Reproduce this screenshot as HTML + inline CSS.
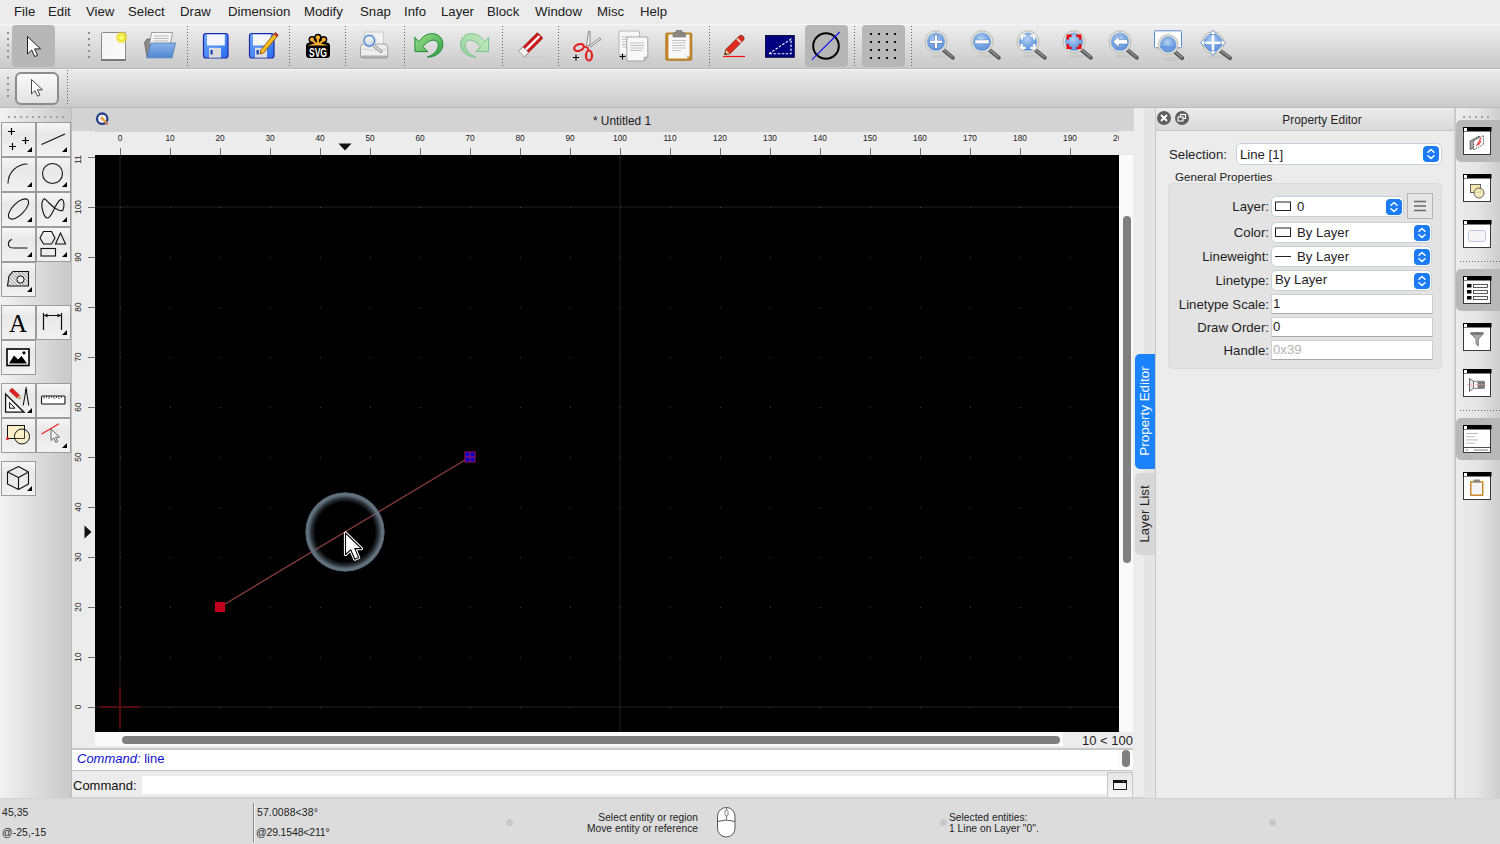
<!DOCTYPE html>
<html><head><meta charset="utf-8">
<style>
*{margin:0;padding:0;box-sizing:border-box}
html,body{width:1500px;height:844px;overflow:hidden;background:#ececec;font-family:"Liberation Sans",sans-serif;color:#1a1a1a;position:relative}
.a{position:absolute}
svg{overflow:visible;position:absolute}
#menu{left:0;top:0;width:1500px;height:24px;background:#ececec}
#menu span{position:absolute;top:4px;font-size:13.2px;line-height:16px;color:#202020}
#tb1{left:0;top:24px;width:1500px;height:45px;background:linear-gradient(#eeeeee,#c9c9c9);border-top:1px solid #f6f6f6;border-bottom:1px solid #b9b9b9}
#tb2{left:0;top:69px;width:1500px;height:39px;background:linear-gradient(#ebebeb,#cacaca);border-top:1px solid #f5f5f5;border-bottom:1px solid #bbbbbb}
.grip{position:absolute;width:2px;background:repeating-linear-gradient(#8e8e8e 0 2px,transparent 2px 6px)}
.hgrip{position:absolute;height:2px;background:repeating-linear-gradient(90deg,#8e8e8e 0 2px,transparent 2px 5px)}
.sep{position:absolute;width:1px;background:repeating-linear-gradient(#606060 0 1px,transparent 1px 3px)}
.hsep{position:absolute;height:1px;background:repeating-linear-gradient(90deg,#606060 0 1px,transparent 1px 3px)}
.sel{position:absolute;background:#b7b7b7;border-radius:4px}
.tb{position:absolute;width:35px;height:35px;border:1px solid #a6a6a6;background:linear-gradient(#fbfbfb,#e4e4e4)}
.rl{position:absolute;font-size:8.3px;line-height:10px;color:#222;text-align:center;width:30px}
#status .t{position:absolute;font-size:10.4px;line-height:12px;color:#222;white-space:nowrap}
.lbl{position:absolute;font-size:13.2px;line-height:15px;color:#1e1e1e;text-align:right;white-space:nowrap}
.combo{position:absolute;background:#fff;border:1px solid #c9d0d8;border-radius:5px;height:21px}
.field{position:absolute;background:#fff;border:1px solid #cfcfcf;border-bottom-color:#a8a8a8;height:20px}
.ftxt{position:absolute;font-size:13.2px;line-height:15px;color:#1e1e1e;white-space:nowrap}
.bluebtn{position:absolute;width:16px;height:16px;border-radius:4px;background:#1c7cf7}

</style></head><body>
<div id="menu" class="a">
<span style="left:14px">File</span><span style="left:48px">Edit</span><span style="left:86px">View</span><span style="left:128px">Select</span><span style="left:180px">Draw</span><span style="left:228px">Dimension</span><span style="left:304px">Modify</span><span style="left:360px">Snap</span><span style="left:404px">Info</span><span style="left:441px">Layer</span><span style="left:487px">Block</span><span style="left:535px">Window</span><span style="left:597px">Misc</span><span style="left:640px">Help</span>
</div>
<div id="tb1" class="a"></div>
<div id="tb2" class="a"></div>
<div class="grip" style="left:7px;top:32px;height:28px"></div>
<div class="sel" style="left:12px;top:25px;width:43px;height:42px"></div>
<svg style="left:27px;top:36px" width="14" height="21"><path d="M0 0v17.5l4.2-4 3 6.6 2.8-1.3-2.9-6.4h5.9z" transform="translate(0.5 0.5)" fill="#fff" stroke="#222" stroke-width="1" stroke-linejoin="round"/></svg>
<div class="grip" style="left:88px;top:32px;height:28px"></div>
<svg style="left:0;top:0" width="1500" height="70"><defs><radialGradient id="glow"><stop offset="0.2" stop-color="#ffff80"/><stop offset="0.55" stop-color="#f0e020"/><stop offset="1" stop-color="#f0e020" stop-opacity="0"/></radialGradient><linearGradient id="pg" x1="0" y1="0" x2="1" y2="1"><stop offset="0" stop-color="#f2f2f2"/><stop offset="1" stop-color="#fcfcfc"/></linearGradient><linearGradient id="fl" x1="0" y1="0" x2="0" y2="1"><stop offset="0" stop-color="#8ab4e8"/><stop offset="1" stop-color="#4f88d0"/></linearGradient><linearGradient id="fd" x1="0" y1="0" x2="1" y2="1"><stop offset="0" stop-color="#70a8f8"/><stop offset="1" stop-color="#2a6ef0"/></linearGradient><linearGradient id="gr" x1="0" y1="0" x2="1" y2="1"><stop offset="0" stop-color="#9ee08a"/><stop offset="1" stop-color="#2ea043"/></linearGradient><linearGradient id="grl" x1="0" y1="0" x2="1" y2="1"><stop offset="0" stop-color="#c8ecc0"/><stop offset="1" stop-color="#8fd09a"/></linearGradient><radialGradient id="lens" cx="0.45" cy="0.35" r="0.7"><stop offset="0" stop-color="#b8d4f4"/><stop offset="0.5" stop-color="#7aa8e4"/><stop offset="1" stop-color="#5a8cd8"/></radialGradient></defs><rect x="101.5" y="32.5" width="24" height="28" rx="1" fill="url(#pg)" stroke="#8a8a8a"/><rect x="101" y="59" width="25" height="2" fill="#7a7a7a"/><circle cx="121.5" cy="37.5" r="6.5" fill="url(#glow)"/><path d="M144.5 42.5 L147 39 H152 L149 57.5 H147 Z" fill="#8a8a8a" stroke="#666" stroke-width="0.8"/><path d="M151.5 32.5 H172.5 L170 45 H149.5 Z" fill="#f6f6f6" stroke="#8a8a8a" stroke-width="0.8"/><path d="M154 36h15M153.5 38.5h15M153 41h15" stroke="#b8b8b8" stroke-width="1"/><path d="M151 43 H175.5 L172 57.8 H146.8 Z" fill="url(#fl)" stroke="#4a7ab8" stroke-width="0.8"/><rect x="203.5" y="33.5" width="24.5" height="24.5" rx="2.5" fill="url(#fd)" stroke="#2028a8" stroke-width="1.2"/><rect x="207" y="34.5" width="17.8" height="11" fill="#f4f6fc"/><rect x="209" y="47.8" width="12" height="9.8" fill="#dcdcdc"/><rect x="210.5" y="50" width="2.2" height="4.5" fill="#1840b0"/><rect x="249.5" y="33.5" width="24.5" height="24.5" rx="2.5" fill="url(#fd)" stroke="#2028a8" stroke-width="1.2"/><rect x="253" y="34.5" width="17.8" height="11" fill="#f4f6fc"/><rect x="255" y="47.8" width="12" height="9.8" fill="#dcdcdc"/><rect x="256.5" y="50" width="2.2" height="4.5" fill="#1840b0"/><path d="M260.5 50.5 L274 34 L277 36.5 L263.5 53 L260 54 Z" fill="#f8c020" stroke="#8a4a10" stroke-width="0.9"/><path d="M274 34 L275.5 32.5 L278.3 35 L277 36.5 Z" fill="#e04040" stroke="#8a2a10" stroke-width="0.8"/><g fill="#000"><rect x="306" y="42.5" width="24" height="15.5" rx="3.5"/><circle cx="317.9" cy="37.4" r="3.7"/><circle cx="312" cy="39.6" r="3.5"/><circle cx="323.8" cy="39.6" r="3.5"/><path d="M309 44 L314 38 H322 L327 44Z"/></g><g fill="#f8ae30"><circle cx="317.9" cy="37.4" r="2.2"/><circle cx="312" cy="39.6" r="2.1"/><circle cx="323.8" cy="39.6" r="2.1"/></g><path d="M317.9 37.5 V44.5 M312 39.7 L317 44.5 M323.8 39.7 L318.8 44.5" stroke="#f8ae30" stroke-width="2"/><path d="M307.8 45.6 Q312 43.8 317.9 43.3 Q324 43.8 328.2 45.6 Z" fill="#f8ae30"/><text x="318" y="56.8" text-anchor="middle" font-family="Liberation Sans" font-weight="bold" font-size="12.5" fill="#fff" textLength="18" lengthAdjust="spacingAndGlyphs">SVG</text><rect x="364.5" y="32" width="19" height="14" rx="1" fill="#f2f2f2" stroke="#c4c4c4" stroke-width="0.8"/><path d="M360.5 47 Q360.5 44 364 44 H384 Q387.7 44 387.7 47 V56 Q387.7 58 385 58 H363 Q360.5 58 360.5 56 Z" fill="#eeeeee" stroke="#9a9a9a" stroke-width="0.9"/><rect x="361" y="55.5" width="26.5" height="2.6" rx="1" fill="#8a8a8a" opacity="0.6"/><path d="M362.5 49 Q374 51.5 386 49" fill="none" stroke="#c8c8c8" stroke-width="0.8"/><path d="M372.5 44.5 L381 51.5" stroke="#8a8a8a" stroke-width="3.2" stroke-linecap="round"/><path d="M372.5 44.5 L381 51.5" stroke="#d4d4d4" stroke-width="1.8" stroke-linecap="round"/><circle cx="369.3" cy="40.7" r="6.8" fill="#f6f6f6" stroke="#c8c8c8" stroke-width="0.6"/><circle cx="369.3" cy="40.7" r="5.4" fill="#cfdcec" stroke="#3c7ad0" stroke-width="1.2"/><ellipse cx="368.8" cy="39.3" rx="3.5" ry="2.4" fill="#eef3fa" opacity="0.8"/><path d="M414.8 37.3 L415 51.6 L427.7 51.6 L422.9 46.5 C426 43 429 40.3 433 40.1 C436.5 40 438.5 42.5 438.3 45.5 C438 50.5 433 55.5 427.3 57 C434 57.8 443 52.5 442.9 44.1 C442.8 37.5 437.5 33.6 432.2 33.6 C427 33.6 422.5 36.5 418.7 41.9 Z" fill="url(#gr)" stroke="#1f8a34" stroke-width="1" stroke-linejoin="round"/><g transform="matrix(-1 0 0 1 903.5 0)"><path d="M414.8 37.3 L415 51.6 L427.7 51.6 L422.9 46.5 C426 43 429 40.3 433 40.1 C436.5 40 438.5 42.5 438.3 45.5 C438 50.5 433 55.5 427.3 57 C434 57.8 443 52.5 442.9 44.1 C442.8 37.5 437.5 33.6 432.2 33.6 C427 33.6 422.5 36.5 418.7 41.9 Z" fill="url(#grl)" stroke="#7cc48a" stroke-width="1" stroke-linejoin="round"/></g><ellipse cx="532" cy="57.2" rx="11" ry="1.3" fill="#c8c8c8" opacity="0.8"/><g transform="translate(531 44.5) rotate(-45)"><rect x="-13" y="-4" width="26" height="8" rx="1" fill="#d01818" stroke="#801010" stroke-width="0.6"/><rect x="-8" y="-1.2" width="20" height="2.4" fill="#fafafa"/><rect x="-13.5" y="-4" width="6" height="8" fill="#f4f4f4" stroke="#808080" stroke-width="0.6"/></g><path d="M586.5 46 L588.5 31.5 L590 31 L590 45 Z" fill="#f4f4f4" stroke="#707070" stroke-width="0.8"/><path d="M589.5 45.5 L600 37.8 L600.8 39.5 L590.5 47 Z" fill="#f4f4f4" stroke="#707070" stroke-width="0.8"/><ellipse cx="579" cy="47.5" rx="5" ry="3.2" transform="rotate(-20 579 47.5)" fill="none" stroke="#e02020" stroke-width="2.2"/><ellipse cx="589" cy="55.5" rx="3" ry="5" fill="none" stroke="#e02020" stroke-width="2.2"/><path d="M583.5 46.3 L588 48 L588 50.5" stroke="#e02020" stroke-width="1.8" fill="none"/><path d="M573 57.5h6M576 54.5v6" stroke="#000" stroke-width="1.1"/><path d="M619 31 H638.5 Q639.5 31 639.5 32 V55 H619 Z" fill="#f6f6f6" stroke="#a8a8a8" stroke-width="0.8"/><path d="M622 37h5M622 39.5h5M622 42h5M622 44.5h5M622 47h5" stroke="#c4c4c4"/><path d="M626.8 37 H646.8 Q647.8 37 647.8 38 V57 L644 61 H626.8 Z" fill="#f8f8f8" stroke="#9a9a9a" stroke-width="0.9"/><path d="M647.8 57 L644 61 V57 Z" fill="#c8c8c8" stroke="#9a9a9a" stroke-width="0.6"/><path d="M630 43h14M630 45.5h14M630 48h14M630 50.5h12" stroke="#c0c0c0"/><path d="M619.5 56.5h6M622.5 53.5v6" stroke="#000" stroke-width="1.1"/><rect x="665.8" y="33" width="26" height="27.3" rx="1.2" fill="#c88a2a" stroke="#a06a18" stroke-width="0.8"/><path d="M668.5 34.5 H689.5 V56 L687 58.5 H668.5 Z" fill="#f8f8f8"/><path d="M689.5 56 L687 58.5 V56 Z" fill="#bbb"/><path d="M672 40.5h14M672 43h14M672 45.5h13M672 48h14M672 50.5h9" stroke="#c4c4c4"/><path d="M673 37 V34 Q673 32.5 674.5 32.5 H676 V30.5 H682 V32.5 H683.5 Q685.5 32.5 685.5 34 V37 Z" fill="#8a8a80" stroke="#707068" stroke-width="0.6"/><path d="M723 56.5h22" stroke="#ee1010" stroke-width="1.2"/><g transform="translate(734 45.5) rotate(-45)"><path d="M-13 0 L-8.5 -3 H10 Q13 -3 13 0 Q13 3 10 3 H-8.5 Z" fill="#e02a20" stroke="#7a3a10" stroke-width="0.8"/><path d="M-13 0 L-8.5 -3 V3 Z" fill="#f0d0a0" stroke="#7a3a10" stroke-width="0.6"/><path d="M-13 0 L-11 -1.3 V1.3 Z" fill="#222"/><rect x="6" y="-3" width="2" height="6" fill="#e8c8c8"/></g><rect x="765.5" y="35.5" width="28.8" height="21.8" fill="#000080" stroke="#101040" stroke-width="1"/><path d="M769 53.7 L791 39 V53.7 Z" fill="none" stroke="#fff" stroke-width="1.1" stroke-dasharray="2.5 1.5"/></svg>
<div class="sel" style="left:805px;top:25px;width:43px;height:42px"></div>
<svg style="left:805px;top:25px" width="43" height="42"><circle cx="21" cy="21" r="12.8" fill="none" stroke="#000" stroke-width="2"/><path d="M7 34.7 L34.7 7" stroke="#1010f0" stroke-width="1.1"/></svg>
<div class="sep" style="left:854px;top:26px;height:40px"></div>
<div class="sep" style="left:911px;top:26px;height:40px"></div>
<div class="sel" style="left:862px;top:25px;width:43px;height:42px"></div>
<svg style="left:0;top:0" width="1" height="1"><g fill="#111"><rect x="870" y="33" width="2" height="2"/><rect x="870" y="41" width="2" height="2"/><rect x="870" y="49" width="2" height="2"/><rect x="870" y="57" width="2" height="2"/><rect x="878" y="33" width="2" height="2"/><rect x="878" y="41" width="2" height="2"/><rect x="878" y="49" width="2" height="2"/><rect x="878" y="57" width="2" height="2"/><rect x="886" y="33" width="2" height="2"/><rect x="886" y="41" width="2" height="2"/><rect x="886" y="49" width="2" height="2"/><rect x="886" y="57" width="2" height="2"/><rect x="894" y="33" width="2" height="2"/><rect x="894" y="41" width="2" height="2"/><rect x="894" y="49" width="2" height="2"/><rect x="894" y="57" width="2" height="2"/></g></svg>
<div class="sep" style="left:187px;top:26px;height:40px"></div>
<div class="sep" style="left:289px;top:26px;height:40px"></div>
<div class="sep" style="left:345px;top:26px;height:40px"></div>
<div class="sep" style="left:404px;top:26px;height:40px"></div>
<div class="sep" style="left:502px;top:26px;height:40px"></div>
<div class="sep" style="left:558px;top:26px;height:40px"></div>
<div class="sep" style="left:709px;top:26px;height:40px"></div>
<svg style="left:0;top:0" width="1500" height="70"><ellipse cx="939" cy="56.3" rx="9" ry="2" fill="#b8b8b8" opacity="0.35"/><path d="M943.92 50.379999999999995 L952.8 57.699999999999996" stroke="#5a5a5a" stroke-width="4" stroke-linecap="round"/><path d="M944.42 50.17999999999999 L952.3 56.9" stroke="#9a9a9a" stroke-width="1.2" stroke-linecap="round"/><circle cx="936" cy="41.8" r="11" fill="#e8e8e0" stroke="#b4b4aa" stroke-width="0.9"/><circle cx="936" cy="41.8" r="9" fill="url(#lens)" stroke="#8aa8d0" stroke-width="0.5"/><path d="M929.5 41.8h13M936 35.3v13" stroke="#4a6ab0" stroke-width="3.6"/><path d="M929.8 41.8h12.4M936 35.6v12.4" stroke="#fff" stroke-width="2.4"/><ellipse cx="985" cy="56.3" rx="9" ry="2" fill="#b8b8b8" opacity="0.35"/><path d="M989.92 50.379999999999995 L998.8 57.699999999999996" stroke="#5a5a5a" stroke-width="4" stroke-linecap="round"/><path d="M990.42 50.17999999999999 L998.3 56.9" stroke="#9a9a9a" stroke-width="1.2" stroke-linecap="round"/><circle cx="982" cy="41.8" r="11" fill="#e8e8e0" stroke="#b4b4aa" stroke-width="0.9"/><circle cx="982" cy="41.8" r="9" fill="url(#lens)" stroke="#8aa8d0" stroke-width="0.5"/><rect x="975" y="40" width="14" height="3.6" fill="#fff" stroke="#5a7ab0" stroke-width="0.4"/><ellipse cx="1031" cy="56.3" rx="9" ry="2" fill="#b8b8b8" opacity="0.35"/><path d="M1035.92 50.379999999999995 L1044.8 57.699999999999996" stroke="#5a5a5a" stroke-width="4" stroke-linecap="round"/><path d="M1036.42 50.17999999999999 L1044.3 56.9" stroke="#9a9a9a" stroke-width="1.2" stroke-linecap="round"/><circle cx="1028" cy="41.8" r="11" fill="#e8e8e0" stroke="#b4b4aa" stroke-width="0.9"/><circle cx="1028" cy="41.8" r="9" fill="url(#lens)" stroke="#8aa8d0" stroke-width="0.5"/><path d="M1021.8 39.5v-3.8h3.8M1030.4 35.7h3.8v3.8M1034.2 44.1v3.8h-3.8M1025.6 47.9h-3.8v-3.8" stroke="#fff" stroke-width="2.3" fill="none"/><ellipse cx="1077" cy="56.3" rx="9" ry="2" fill="#b8b8b8" opacity="0.35"/><path d="M1081.92 50.379999999999995 L1090.8 57.699999999999996" stroke="#5a5a5a" stroke-width="4" stroke-linecap="round"/><path d="M1082.42 50.17999999999999 L1090.3 56.9" stroke="#9a9a9a" stroke-width="1.2" stroke-linecap="round"/><circle cx="1074" cy="41.8" r="11" fill="#e8e8e0" stroke="#b4b4aa" stroke-width="0.9"/><circle cx="1074" cy="41.8" r="9" fill="url(#lens)" stroke="#8aa8d0" stroke-width="0.5"/><path d="M1067.8 39.5v-3.8h3.8M1076.4 35.7h3.8v3.8M1080.2 44.1v3.8h-3.8M1071.6 47.9h-3.8v-3.8" stroke="#e00" stroke-width="2.4" fill="none"/><ellipse cx="1123" cy="56.3" rx="9" ry="2" fill="#b8b8b8" opacity="0.35"/><path d="M1127.92 50.379999999999995 L1136.8 57.699999999999996" stroke="#5a5a5a" stroke-width="4" stroke-linecap="round"/><path d="M1128.42 50.17999999999999 L1136.3 56.9" stroke="#9a9a9a" stroke-width="1.2" stroke-linecap="round"/><circle cx="1120" cy="41.8" r="11" fill="#e8e8e0" stroke="#b4b4aa" stroke-width="0.9"/><circle cx="1120" cy="41.8" r="9" fill="url(#lens)" stroke="#8aa8d0" stroke-width="0.5"/><path d="M1113 41.8 L1119 36.3 V39.6 H1127.5 V44 H1119 V47.3 Z" fill="#fff" stroke="#4a6aa0" stroke-width="0.5"/><rect x="1154.5" y="30.8" width="27" height="17" rx="1" fill="#fff" stroke="#5a8ad0" stroke-width="1"/><ellipse cx="1171.2" cy="59.1" rx="9" ry="2" fill="#b8b8b8" opacity="0.35"/><path d="M1175.4 52.400000000000006 L1182.2 58.1" stroke="#5a5a5a" stroke-width="4" stroke-linecap="round"/><path d="M1175.9 52.2 L1181.7 57.300000000000004" stroke="#9a9a9a" stroke-width="1.2" stroke-linecap="round"/><circle cx="1168.2" cy="44.6" r="10" fill="#e8e8e0" stroke="#b4b4aa" stroke-width="0.9"/><circle cx="1168.2" cy="44.6" r="8" fill="url(#lens)" stroke="#8aa8d0" stroke-width="0.5"/><rect x="1160" y="46" width="16.4" height="2.5" fill="#5a92dc" opacity="0.6"/><ellipse cx="1216" cy="57.2" rx="9" ry="2" fill="#b8b8b8" opacity="0.35"/><path d="M1220.92 51.28 L1230 58.1" stroke="#5a5a5a" stroke-width="4" stroke-linecap="round"/><path d="M1221.42 51.08 L1229.5 57.300000000000004" stroke="#9a9a9a" stroke-width="1.2" stroke-linecap="round"/><circle cx="1213" cy="42.7" r="11" fill="#e8e8e0" stroke="#b4b4aa" stroke-width="0.9"/><circle cx="1213" cy="42.7" r="9" fill="url(#lens)" stroke="#8aa8d0" stroke-width="0.5"/><path d="M1204.5 42.7h17M1213 34.2v17" stroke="#fff" stroke-width="2.4"/><path d="M1213 30.1l-3.6 4.4h7.2zM1213 55.3l-3.6-4.4h7.2zM1200.4 42.7l4.4-3.6v7.2zM1225.6 42.7l-4.4-3.6v7.2z" fill="#fff" stroke="#4a7ac0" stroke-width="0.7"/></svg>
<div class="grip" style="left:7px;top:77px;height:22px"></div>
<div class="a" style="left:15px;top:72px;width:44px;height:33px;border:2px solid #8c8c8c;border-radius:6px;background:linear-gradient(#fafafa,#e2e2e2)"></div>
<svg style="left:31px;top:79px" width="12" height="18"><path d="M0 0v14.5l3.5-3.3 2.5 5.5 2.4-1.1-2.4-5.3h4.9z" transform="translate(0.5 0.5)" fill="#fff" stroke="#333" stroke-width="0.9" stroke-linejoin="round"/></svg>
<div class="sep" style="left:67px;top:70px;height:35px"></div><div class="a" style="left:0;top:108px;width:72px;height:690px;background:linear-gradient(90deg,#f2f2f2 0,#c8c8c8 71px)"></div>
<div class="a" style="left:71px;top:108px;width:1px;height:690px;background:#bdbdbd"></div>
<div class="hgrip" style="left:8px;top:116px;width:56px;background:repeating-linear-gradient(90deg,#a2a2a2 0 2px,transparent 2px 6px)"></div>
<div class="a" style="left:1px;top:122px;width:35px;height:35px;border:1px solid #9c9c9c;background:linear-gradient(#f6f6f6,#e8e8e8 35%,#f2f2f2)"></div>
<div class="a" style="left:36px;top:122px;width:35px;height:35px;border:1px solid #9c9c9c;background:linear-gradient(#f6f6f6,#e8e8e8 35%,#f2f2f2)"></div>
<div class="a" style="left:1px;top:157px;width:35px;height:35px;border:1px solid #9c9c9c;background:linear-gradient(#f6f6f6,#e8e8e8 35%,#f2f2f2)"></div>
<div class="a" style="left:36px;top:157px;width:35px;height:35px;border:1px solid #9c9c9c;background:linear-gradient(#f6f6f6,#e8e8e8 35%,#f2f2f2)"></div>
<div class="a" style="left:1px;top:192px;width:35px;height:35px;border:1px solid #9c9c9c;background:linear-gradient(#f6f6f6,#e8e8e8 35%,#f2f2f2)"></div>
<div class="a" style="left:36px;top:192px;width:35px;height:35px;border:1px solid #9c9c9c;background:linear-gradient(#f6f6f6,#e8e8e8 35%,#f2f2f2)"></div>
<div class="a" style="left:1px;top:227px;width:35px;height:35px;border:1px solid #9c9c9c;background:linear-gradient(#f6f6f6,#e8e8e8 35%,#f2f2f2)"></div>
<div class="a" style="left:36px;top:227px;width:35px;height:35px;border:1px solid #9c9c9c;background:linear-gradient(#f6f6f6,#e8e8e8 35%,#f2f2f2)"></div>
<div class="a" style="left:1px;top:262px;width:35px;height:35px;border:1px solid #9c9c9c;background:linear-gradient(#f6f6f6,#e8e8e8 35%,#f2f2f2)"></div>
<div class="a" style="left:1px;top:305px;width:35px;height:35px;border:1px solid #9c9c9c;background:linear-gradient(#f6f6f6,#e8e8e8 35%,#f2f2f2)"></div>
<div class="a" style="left:36px;top:305px;width:35px;height:35px;border:1px solid #9c9c9c;background:linear-gradient(#f6f6f6,#e8e8e8 35%,#f2f2f2)"></div>
<div class="a" style="left:1px;top:340px;width:35px;height:35px;border:1px solid #9c9c9c;background:linear-gradient(#f6f6f6,#e8e8e8 35%,#f2f2f2)"></div>
<div class="a" style="left:1px;top:383px;width:35px;height:35px;border:1px solid #9c9c9c;background:linear-gradient(#f6f6f6,#e8e8e8 35%,#f2f2f2)"></div>
<div class="a" style="left:36px;top:383px;width:35px;height:35px;border:1px solid #9c9c9c;background:linear-gradient(#f6f6f6,#e8e8e8 35%,#f2f2f2)"></div>
<div class="a" style="left:1px;top:418px;width:35px;height:35px;border:1px solid #9c9c9c;background:linear-gradient(#f6f6f6,#e8e8e8 35%,#f2f2f2)"></div>
<div class="a" style="left:36px;top:418px;width:35px;height:35px;border:1px solid #9c9c9c;background:linear-gradient(#f6f6f6,#e8e8e8 35%,#f2f2f2)"></div>
<div class="a" style="left:1px;top:461px;width:35px;height:35px;border:1px solid #9c9c9c;background:linear-gradient(#f6f6f6,#e8e8e8 35%,#f2f2f2)"></div>
<svg style="left:0;top:0" width="72" height="844"><path d="M62 152L67 147V152Z" fill="#000"/><path d="M27 491L32 486V491Z" fill="#000"/><path d="M27 292L32 287V292Z" fill="#000"/><path d="M62 222L67 217V222Z" fill="#000"/><path d="M27 152L32 147V152Z" fill="#000"/><path d="M62 257L67 252V257Z" fill="#000"/><path d="M62 448L67 443V448Z" fill="#000"/><path d="M62 187L67 182V187Z" fill="#000"/><path d="M27 413L32 408V413Z" fill="#000"/><path d="M27 222L32 217V222Z" fill="#000"/><path d="M62 335L67 330V335Z" fill="#000"/><path d="M27 257L32 252V257Z" fill="#000"/><path d="M27 187L32 182V187Z" fill="#000"/><path d="M8.0 131.5h7M11.5 128.0v7" stroke="#000" stroke-width="1.2"/><path d="M22.0 140.5h7M25.5 137.0v7" stroke="#000" stroke-width="1.2"/><path d="M9.0 146.5h7M12.5 143.0v7" stroke="#000" stroke-width="1.2"/><path d="M41.5 144.5 L65 134" stroke="#111" stroke-width="1.2"/><path d="M8 183.5 A19.5 19.5 0 0 1 27.5 164" fill="none" stroke="#111" stroke-width="1.1"/><circle cx="52.5" cy="173.5" r="10" fill="none" stroke="#111" stroke-width="1.1"/><ellipse cx="18.5" cy="209" rx="13" ry="5.8" transform="rotate(-45 18.5 209)" fill="none" stroke="#111" stroke-width="1.1"/><path d="M43 200 C 40 205, 44 219, 48 218 C 52 217, 55 204, 60 200 C 64 197, 65 206, 63 210 C 60 213, 52 206, 49 203 C 46 200, 44 197, 43 200 Z" fill="none" stroke="#111" stroke-width="1.1"/><path d="M12 239.5 Q8 240.5 8.5 245 Q9 248 14 248 H27.5" fill="none" stroke="#111" stroke-width="1.1"/><path d="M43.5 231.5 H51.5 L55 238 L51.5 244 H43.5 L40 238 Z" fill="none" stroke="#111" stroke-width="1.1"/><path d="M60.5 233 L65.5 244 H55.5 Z" fill="none" stroke="#111" stroke-width="1.1"/><rect x="41" y="248.5" width="14.5" height="7.5" fill="none" stroke="#111" stroke-width="1.1"/><defs><pattern id="hp" width="2.5" height="2.5" patternUnits="userSpaceOnUse" patternTransform="rotate(-45)"><rect width="0.7" height="2.5" fill="#888"/></pattern></defs><path d="M7.5 286 L9 276 L13 271.5 H28.5 V286 Z" fill="url(#hp)" stroke="#111" stroke-width="1.1"/><circle cx="20.5" cy="279.5" r="3.6" fill="#f0f0f0" stroke="#111" stroke-width="1"/><text x="18" y="331.5" text-anchor="middle" font-family="Liberation Serif" font-size="25" fill="#000">A</text><path d="M43.5 313 V330 M61.5 313 V330 M44 315.5 H61" stroke="#111" stroke-width="1.2"/><path d="M44 315.5 L47.5 313.5 V317.5 Z M61 315.5 L57.5 313.5 V317.5 Z" fill="#111"/><rect x="7" y="349" width="22" height="16.5" fill="#fff" stroke="#000" stroke-width="1.6"/><path d="M9 363.5 L14 355.5 L18 359.5 L21.5 356 L27 363.5 Z" fill="#000"/><circle cx="24" cy="352.8" r="1.6" fill="#000"/><path d="M5.6 394 V412.2 H24 Z" fill="#fafafa" stroke="#111" stroke-width="1.3" stroke-linejoin="miter"/><path d="M9.6 402.5 V408.2 H15 Z" fill="none" stroke="#111" stroke-width="1"/><g transform="translate(15 393.5) rotate(43)"><rect x="-6" y="-2" width="10.5" height="4" rx="1" fill="#e02020" stroke="#901818" stroke-width="0.5"/><path d="M4.5 -2 L8 0 L4.5 2Z" fill="#e8c080" stroke="#806030" stroke-width="0.4"/></g><path d="M26.1 389 L23.2 405.5 M26.1 389 L28.8 405.5 M26.1 387 V389" stroke="#111" stroke-width="1.1" fill="none"/><circle cx="26.1" cy="390.5" r="1.2" fill="#111"/><rect x="41.5" y="396" width="23.5" height="8" rx="1" fill="#fff" stroke="#111" stroke-width="1.1"/><path d="M44 396v3M46.5 396v2M49 396v3M51.5 396v2M54 396v3M56.5 396v2M59 396v3M61.5 396v2" stroke="#111" stroke-width="0.7"/><rect x="7.5" y="425.5" width="17" height="13" fill="#fbf0c8" stroke="#111" stroke-width="1"/><circle cx="22" cy="436.5" r="7.5" fill="#fbf0c8" fill-opacity="0.9" stroke="#111" stroke-width="1"/><path d="M24.5 438.5 V425.5 H7.5 V438.5 H24.5" fill="none" stroke="#111" stroke-width="0.8"/><circle cx="7.5" cy="438.5" r="1.5" fill="#e82020"/><path d="M41.5 434 L59 423.8" stroke="#ee2020" stroke-width="1.1"/><path d="M51 429 v11.5 l2.8 -2.6 2 4.4 1.8 -0.8 -2 -4.3 h3.9 z" fill="#f4f4f4" stroke="#555" stroke-width="0.9" stroke-linejoin="round"/><path d="M7.5 472 L18.5 466.5 L28.5 472 V484 L18.5 489.5 L7.5 484 Z M7.5 472 L18.5 477.5 L28.5 472 M18.5 477.5 V489.5" fill="none" stroke="#111" stroke-width="1.1" stroke-linejoin="round"/></svg><div class="a" style="left:72px;top:108px;width:1072px;height:690px;background:#ececec"></div>
<div class="a" style="left:72px;top:108px;width:1062px;height:24px;background:#d3d3d3"></div>
<div class="a" style="left:560px;top:114px;width:124px;text-align:center;font-size:11.9px;line-height:14px;color:#202020;white-space:nowrap">* Untitled 1</div>
<svg style="left:94px;top:111px" width="16" height="16" viewBox="94 111 16 16">
<circle cx="102.2" cy="118.7" r="4.4" fill="#f4f4f4"/>
<path d="M99.5 118.5h5M102 116v5" stroke="#c88" stroke-width="0.6"/>
<circle cx="102.2" cy="118.7" r="5.2" fill="none" stroke="#2a3f8a" stroke-width="2.3"/>
<path d="M101.5 117.5 L106.3 122.8" stroke="#f0a020" stroke-width="2"/>
<circle cx="107.2" cy="123.8" r="1.1" fill="#e06060"/>
</svg>
<div class="rl" style="left:105px;top:133px">0</div>
<div class="a" style="left:120px;top:148px;width:1px;height:7px;background:#707070"></div>
<div class="rl" style="left:155px;top:133px">10</div>
<div class="a" style="left:170px;top:148px;width:1px;height:7px;background:#707070"></div>
<div class="rl" style="left:205px;top:133px">20</div>
<div class="a" style="left:220px;top:148px;width:1px;height:7px;background:#707070"></div>
<div class="rl" style="left:255px;top:133px">30</div>
<div class="a" style="left:270px;top:148px;width:1px;height:7px;background:#707070"></div>
<div class="rl" style="left:305px;top:133px">40</div>
<div class="a" style="left:320px;top:148px;width:1px;height:7px;background:#707070"></div>
<div class="rl" style="left:355px;top:133px">50</div>
<div class="a" style="left:370px;top:148px;width:1px;height:7px;background:#707070"></div>
<div class="rl" style="left:405px;top:133px">60</div>
<div class="a" style="left:420px;top:148px;width:1px;height:7px;background:#707070"></div>
<div class="rl" style="left:455px;top:133px">70</div>
<div class="a" style="left:470px;top:148px;width:1px;height:7px;background:#707070"></div>
<div class="rl" style="left:505px;top:133px">80</div>
<div class="a" style="left:520px;top:148px;width:1px;height:7px;background:#707070"></div>
<div class="rl" style="left:555px;top:133px">90</div>
<div class="a" style="left:570px;top:148px;width:1px;height:7px;background:#707070"></div>
<div class="rl" style="left:605px;top:133px">100</div>
<div class="a" style="left:620px;top:148px;width:1px;height:7px;background:#707070"></div>
<div class="rl" style="left:655px;top:133px">110</div>
<div class="a" style="left:670px;top:148px;width:1px;height:7px;background:#707070"></div>
<div class="rl" style="left:705px;top:133px">120</div>
<div class="a" style="left:720px;top:148px;width:1px;height:7px;background:#707070"></div>
<div class="rl" style="left:755px;top:133px">130</div>
<div class="a" style="left:770px;top:148px;width:1px;height:7px;background:#707070"></div>
<div class="rl" style="left:805px;top:133px">140</div>
<div class="a" style="left:820px;top:148px;width:1px;height:7px;background:#707070"></div>
<div class="rl" style="left:855px;top:133px">150</div>
<div class="a" style="left:870px;top:148px;width:1px;height:7px;background:#707070"></div>
<div class="rl" style="left:905px;top:133px">160</div>
<div class="a" style="left:920px;top:148px;width:1px;height:7px;background:#707070"></div>
<div class="rl" style="left:955px;top:133px">170</div>
<div class="a" style="left:970px;top:148px;width:1px;height:7px;background:#707070"></div>
<div class="rl" style="left:1005px;top:133px">180</div>
<div class="a" style="left:1020px;top:148px;width:1px;height:7px;background:#707070"></div>
<div class="rl" style="left:1055px;top:133px">190</div>
<div class="a" style="left:1070px;top:148px;width:1px;height:7px;background:#707070"></div>
<div class="rl" style="left:1105px;top:133px">200</div>
<div class="a" style="left:1120px;top:148px;width:1px;height:7px;background:#707070"></div>
<div class="rl" style="left:63px;top:702px;transform:rotate(-90deg)">0</div>
<div class="a" style="left:88px;top:707px;width:7px;height:1px;background:#707070"></div>
<div class="rl" style="left:63px;top:652px;transform:rotate(-90deg)">10</div>
<div class="a" style="left:88px;top:657px;width:7px;height:1px;background:#707070"></div>
<div class="rl" style="left:63px;top:602px;transform:rotate(-90deg)">20</div>
<div class="a" style="left:88px;top:607px;width:7px;height:1px;background:#707070"></div>
<div class="rl" style="left:63px;top:552px;transform:rotate(-90deg)">30</div>
<div class="a" style="left:88px;top:557px;width:7px;height:1px;background:#707070"></div>
<div class="rl" style="left:63px;top:502px;transform:rotate(-90deg)">40</div>
<div class="a" style="left:88px;top:507px;width:7px;height:1px;background:#707070"></div>
<div class="rl" style="left:63px;top:452px;transform:rotate(-90deg)">50</div>
<div class="a" style="left:88px;top:457px;width:7px;height:1px;background:#707070"></div>
<div class="rl" style="left:63px;top:402px;transform:rotate(-90deg)">60</div>
<div class="a" style="left:88px;top:407px;width:7px;height:1px;background:#707070"></div>
<div class="rl" style="left:63px;top:352px;transform:rotate(-90deg)">70</div>
<div class="a" style="left:88px;top:357px;width:7px;height:1px;background:#707070"></div>
<div class="rl" style="left:63px;top:302px;transform:rotate(-90deg)">80</div>
<div class="a" style="left:88px;top:307px;width:7px;height:1px;background:#707070"></div>
<div class="rl" style="left:63px;top:252px;transform:rotate(-90deg)">90</div>
<div class="a" style="left:88px;top:257px;width:7px;height:1px;background:#707070"></div>
<div class="rl" style="left:63px;top:202px;transform:rotate(-90deg)">100</div>
<div class="a" style="left:88px;top:207px;width:7px;height:1px;background:#707070"></div>
<div class="rl" style="left:63px;top:152px;transform:rotate(-90deg)">110</div>
<div class="a" style="left:88px;top:157px;width:7px;height:1px;background:#707070"></div>
<div class="a" style="left:72px;top:131px;width:23px;height:23px;background:#ececec"></div>
<div class="a" style="left:72px;top:131px;width:23px;height:1px;background:#ececec"></div>
<svg style="left:338px;top:143px" width="14" height="9"><path d="M0.5 0.5h13l-6.5 7z" fill="#111"/></svg>
<svg style="left:84px;top:525px" width="9" height="14"><path d="M0.5 0.5v13l7-6.5z" fill="#111"/></svg>
<svg style="left:95px;top:155px" width="1024" height="577" viewBox="95 155 1024 577">
<defs><pattern id="gd" x="20" y="7" width="50" height="50" patternUnits="userSpaceOnUse"><rect x="0" y="0" width="1" height="1" fill="#3c3c3c"/></pattern></defs>
<rect x="95" y="155" width="1024" height="577" fill="#000"/>
<rect x="119" y="155" width="2" height="577" fill="#101010"/>
<rect x="619" y="155" width="2" height="577" fill="#101010"/>
<rect x="95" y="706" width="1024" height="2" fill="#101010"/>
<rect x="95" y="206" width="1024" height="2" fill="#101010"/>
<rect x="95" y="155" width="1024" height="577" fill="url(#gd)"/>
<path d="M100 707h40M120 687v40" stroke="#540a0a" stroke-width="2"/>
<line x1="220" y1="607" x2="470" y2="457" stroke="#8c3c3c" stroke-width="1.3"/>
<rect x="215" y="602" width="10" height="10" fill="#c0001c"/>
<rect x="465" y="452" width="10" height="10" fill="#0000c8" stroke="#a01060" stroke-width="1"/>
<path d="M470 452v10M465 457h10" stroke="#7a1070" stroke-width="1.5"/>
<defs><radialGradient id="rg" cx="345" cy="532" r="40" gradientUnits="userSpaceOnUse">
<stop offset="0.74" stop-color="#5b6b79" stop-opacity="0"/>
<stop offset="0.84" stop-color="#5b6b79" stop-opacity="0.45"/>
<stop offset="0.90" stop-color="#63737f" stop-opacity="0.85"/>
<stop offset="0.95" stop-color="#6a7985" stop-opacity="1"/>
<stop offset="0.985" stop-color="#5b6b79" stop-opacity="0.8"/>
<stop offset="1" stop-color="#5b6b79" stop-opacity="0"/>
</radialGradient></defs>
<circle cx="345" cy="532" r="40" fill="url(#rg)"/>
<g transform="translate(345.5 533)"><path d="M0 0V21.5L5.2 16.8L9.3 26.2L13.2 24.6L9.3 15.6H16Z" fill="#fff" stroke="#fff" stroke-width="3.2" stroke-linejoin="round"/><path d="M0 0V21.5L5.2 16.8L9.3 26.2L13.2 24.6L9.3 15.6H16Z" fill="#fff" stroke="#000" stroke-width="1.1" stroke-linejoin="round"/></g>
</svg>
<div class="a" style="left:1119px;top:155px;width:14px;height:577px;background:#fafafa"></div>
<div class="a" style="left:1123px;top:216px;width:8px;height:347px;background:#7f7f7f;border-radius:4px"></div>
<div class="a" style="left:95px;top:732px;width:968px;height:14px;background:#fafafa"></div>
<div class="a" style="left:122px;top:736px;width:938px;height:8px;background:#7f7f7f;border-radius:4px"></div>
<div class="a" style="left:1060px;top:733px;width:73px;text-align:right;font-size:13px;line-height:15px;color:#1e1e1e;white-space:nowrap">10 &lt; 100</div>
<div class="a" style="left:72px;top:748px;width:1061px;height:23px;background:#fff;border-top:2px solid #c8c8c8;border-bottom:1px solid #c4c4c4"></div>
<div class="a" style="left:1119px;top:750px;width:14px;height:20px;background:#fafafa"></div>
<div class="a" style="left:1122px;top:750px;width:8px;height:17px;background:#7f7f7f;border-radius:4px"></div>
<div class="a" style="left:77px;top:751px;font-size:13px;line-height:15px;color:#1010d0;white-space:nowrap"><i>Command:</i> line</div>
<div class="a" style="left:73px;top:778px;font-size:13px;line-height:15px;color:#111;white-space:nowrap">Command:</div>
<div class="a" style="left:142px;top:776px;width:965px;height:18px;background:#fff"></div>
<div class="a" style="left:1107px;top:772px;width:26px;height:26px;border:1px solid #c6c6c6;background:linear-gradient(#e6e6e6,#f6f6f6)">
<svg style="left:5px;top:7px" width="14" height="11"><rect x="0.5" y="0.5" width="13" height="9" fill="#f4f4f4" stroke="#222"/><rect x="0" y="0" width="14" height="3" fill="#111"/><rect x="10" y="1" width="1" height="1" fill="#aaa"/></svg></div>
<div class="a" style="left:72px;top:797px;width:1072px;height:1px;background:#d0d0d0"></div>
<div class="a" style="left:1144px;top:108px;width:11px;height:690px;background:#e4e4e4"></div>
<div class="a" style="left:1155px;top:108px;width:1px;height:690px;background:#c9c9c9"></div><div class="a" style="left:1119px;top:131px;width:25px;height:24px;background:#ececec"></div>
<div class="a" style="left:72px;top:131px;width:23px;height:24px;background:#ececec"></div><div class="a" style="left:1156px;top:108px;width:299px;height:690px;background:#ececec"></div>
<div class="a" style="left:1454px;top:108px;width:1px;height:690px;background:#cfcfcf"></div>
<div class="a" style="left:1156px;top:108px;width:298px;height:23px;background:linear-gradient(#ececec,#d9d9d9);border-bottom:1px solid #c6c6c6"></div>
<div class="a" style="left:1252px;top:113px;width:140px;text-align:center;font-size:11.9px;line-height:14px;color:#222">Property Editor</div>
<svg style="left:1156px;top:110px" width="40" height="16">
<circle cx="8" cy="8" r="7" fill="#5f5f5f"/><path d="M5 5L11 11M11 5L5 11" stroke="#fff" stroke-width="1.9"/>
<circle cx="26" cy="8" r="7" fill="#5f5f5f"/><rect x="24.5" y="4.5" width="5" height="4" fill="none" stroke="#fff" stroke-width="1.1"/><rect x="22" y="7" width="5" height="4" fill="#5f5f5f" stroke="#fff" stroke-width="1.1"/>
</svg>
<div class="lbl" style="left:1169px;top:147px;text-align:left">Selection:</div>
<div class="combo" style="left:1236px;top:143px;width:206px;height:22px"></div>
<div class="ftxt" style="left:1240px;top:147px">Line [1]</div>
<div class="bluebtn" style="left:1423px;top:146px"><svg style="left:0;top:0" width="16" height="16"><path d="M5 6.2L8 3.5L11 6.2M5 9.8L8 12.5L11 9.8" fill="none" stroke="#fff" stroke-width="1.5" stroke-linecap="round" stroke-linejoin="round"/></svg></div>
<div class="a" style="left:1175px;top:170px;font-size:11.6px;line-height:13px;color:#222;white-space:nowrap">General Properties</div>
<div class="a" style="left:1168px;top:183px;width:274px;height:186px;background:#e3e3e3;border:1px solid #dbdbdb;border-radius:5px"></div>
<div class="lbl" style="left:1168px;width:101px;top:199px">Layer:</div>
<div class="lbl" style="left:1168px;width:101px;top:225px">Color:</div>
<div class="lbl" style="left:1168px;width:101px;top:249px">Lineweight:</div>
<div class="lbl" style="left:1168px;width:101px;top:273px">Linetype:</div>
<div class="lbl" style="left:1168px;width:101px;top:297px">Linetype Scale:</div>
<div class="lbl" style="left:1168px;width:101px;top:320px">Draw Order:</div>
<div class="lbl" style="left:1168px;width:101px;top:343px">Handle:</div>
<div class="combo" style="left:1271px;top:196px;width:133px;height:21px"></div>
<div class="bluebtn" style="left:1386px;top:199px"><svg style="left:0;top:0" width="16" height="16"><path d="M5 6.2L8 3.5L11 6.2M5 9.8L8 12.5L11 9.8" fill="none" stroke="#fff" stroke-width="1.5" stroke-linecap="round" stroke-linejoin="round"/></svg></div>
<div class="combo" style="left:1271px;top:222px;width:161px;height:21px"></div>
<div class="bluebtn" style="left:1414px;top:225px"><svg style="left:0;top:0" width="16" height="16"><path d="M5 6.2L8 3.5L11 6.2M5 9.8L8 12.5L11 9.8" fill="none" stroke="#fff" stroke-width="1.5" stroke-linecap="round" stroke-linejoin="round"/></svg></div>
<div class="combo" style="left:1271px;top:246px;width:161px;height:21px"></div>
<div class="bluebtn" style="left:1414px;top:249px"><svg style="left:0;top:0" width="16" height="16"><path d="M5 6.2L8 3.5L11 6.2M5 9.8L8 12.5L11 9.8" fill="none" stroke="#fff" stroke-width="1.5" stroke-linecap="round" stroke-linejoin="round"/></svg></div>
<div class="combo" style="left:1271px;top:270px;width:161px;height:21px"></div>
<div class="bluebtn" style="left:1414px;top:273px"><svg style="left:0;top:0" width="16" height="16"><path d="M5 6.2L8 3.5L11 6.2M5 9.8L8 12.5L11 9.8" fill="none" stroke="#fff" stroke-width="1.5" stroke-linecap="round" stroke-linejoin="round"/></svg></div>
<svg style="left:0;top:0" width="1" height="1"><rect x="1275.5" y="202" width="15" height="8.5" fill="#fff" stroke="#222" stroke-width="1"/><rect x="1275.5" y="228" width="15" height="8.5" fill="#fff" stroke="#222" stroke-width="1"/><path d="M1275 256.5h16" stroke="#222" stroke-width="1"/></svg>
<div class="ftxt" style="left:1297px;top:199px">0</div>
<div class="ftxt" style="left:1297px;top:225px">By Layer</div>
<div class="ftxt" style="left:1297px;top:249px">By Layer</div>
<div class="ftxt" style="left:1275px;top:272px">By Layer</div>
<div class="a" style="left:1407px;top:193px;width:26px;height:26px;border:1px solid #b4b4b4;background:#e6e6e6"><svg style="left:0;top:0" width="24" height="24"><path d="M6 7.5h12M6 12h12M6 16.5h12" stroke="#6a6a6a" stroke-width="1.6"/></svg></div>
<div class="field" style="left:1271px;top:294px;width:162px;height:20px"></div>
<div class="ftxt" style="left:1273px;top:296px;color:#1e1e1e">1</div>
<div class="field" style="left:1271px;top:317px;width:162px;height:20px"></div>
<div class="ftxt" style="left:1273px;top:319px;color:#1e1e1e">0</div>
<div class="field" style="left:1271px;top:340px;width:162px;height:20px"></div>
<div class="ftxt" style="left:1273px;top:342px;color:#b4b4b4">0x39</div>
<div class="a" style="left:1135px;top:354px;width:20px;height:115px;background:#1a82fb;border-radius:5px 0 0 5px"></div>
<div class="a" style="left:1086px;top:403px;width:118px;height:16px;transform:rotate(-90deg);text-align:center;font-size:13.4px;line-height:16px;color:#fff;white-space:nowrap">Property Editor</div>
<div class="a" style="left:1135px;top:473px;width:20px;height:82px;background:#d7d7d7;border-radius:5px 0 0 5px"></div>
<div class="a" style="left:1104px;top:506px;width:82px;height:16px;transform:rotate(-90deg);text-align:center;font-size:13.2px;line-height:16px;color:#222;white-space:nowrap">Layer List</div><div class="a" style="left:1455px;top:108px;width:45px;height:690px;background:linear-gradient(90deg,#ececec 0,#e4e4e4 22px,#cdcdcd 45px);border-left:1px solid #c8c8c8"></div>
<div class="hgrip" style="left:1463px;top:116px;width:26px;background:repeating-linear-gradient(90deg,#a2a2a2 0 2px,transparent 2px 6px)"></div>
<div class="a" style="left:1456px;top:120px;width:48px;height:42px;background:#b8b8b8;border-radius:5px"></div>
<div class="a" style="left:1456px;top:269px;width:48px;height:42px;background:#b8b8b8;border-radius:5px"></div>
<div class="a" style="left:1456px;top:418px;width:48px;height:42px;background:#b8b8b8;border-radius:5px"></div>
<div class="hsep" style="left:1460px;top:261px;width:40px;background:repeating-linear-gradient(90deg,#707070 0 1px,transparent 1px 3px)"></div>
<div class="hsep" style="left:1460px;top:410px;width:40px;background:repeating-linear-gradient(90deg,#707070 0 1px,transparent 1px 3px)"></div>
<svg style="left:0;top:0" width="1" height="1"><rect x="1463.5" y="127.5" width="27" height="27" fill="#fff" stroke="#3a3a3a" stroke-width="1"/><rect x="1463" y="127" width="28.5" height="4.5" fill="#000"/><rect x="1464" y="128" width="3" height="3" fill="#fff"/><rect x="1463.5" y="174.5" width="27" height="27" fill="#fff" stroke="#3a3a3a" stroke-width="1"/><rect x="1463" y="174" width="28.5" height="4.5" fill="#000"/><rect x="1464" y="175" width="3" height="3" fill="#fff"/><rect x="1463.5" y="220.5" width="27" height="27" fill="#fff" stroke="#3a3a3a" stroke-width="1"/><rect x="1463" y="220" width="28.5" height="4.5" fill="#000"/><rect x="1464" y="221" width="3" height="3" fill="#fff"/><rect x="1463.5" y="276.5" width="27" height="27" fill="#fff" stroke="#3a3a3a" stroke-width="1"/><rect x="1463" y="276" width="28.5" height="4.5" fill="#000"/><rect x="1464" y="277" width="3" height="3" fill="#fff"/><rect x="1463.5" y="323.5" width="27" height="27" fill="#fff" stroke="#3a3a3a" stroke-width="1"/><rect x="1463" y="323" width="28.5" height="4.5" fill="#000"/><rect x="1464" y="324" width="3" height="3" fill="#fff"/><rect x="1463.5" y="369.5" width="27" height="27" fill="#fff" stroke="#3a3a3a" stroke-width="1"/><rect x="1463" y="369" width="28.5" height="4.5" fill="#000"/><rect x="1464" y="370" width="3" height="3" fill="#fff"/><rect x="1463.5" y="425.5" width="27" height="27" fill="#fff" stroke="#3a3a3a" stroke-width="1"/><rect x="1463" y="425" width="28.5" height="4.5" fill="#000"/><rect x="1464" y="426" width="3" height="3" fill="#fff"/><rect x="1463.5" y="472.5" width="27" height="27" fill="#fff" stroke="#3a3a3a" stroke-width="1"/><rect x="1463" y="472" width="28.5" height="4.5" fill="#000"/><rect x="1464" y="473" width="3" height="3" fill="#fff"/><path d="M1470.2 141 L1479.4 136 V144.5 L1470.2 149.5 Z" fill="#a8a8a8" stroke="#555" stroke-width="0.9"/><path d="M1473.5 141 L1483.5 135.5 V144.5 L1473.5 150 Z" fill="#fcfcfc" stroke="#444" stroke-width="0.8" stroke-dasharray="1.5 0.8"/><path d="M1476.5 146 L1481 138 M1478.5 145 L1481 141" fill="none" stroke="#f03030" stroke-width="1.1"/><rect x="1470.5" y="184.5" width="10" height="8" fill="#f4e8b0" stroke="#555" stroke-width="0.9"/><circle cx="1479" cy="193" r="5" fill="#f4e8b0" fill-opacity="0.85" stroke="#555" stroke-width="0.9"/><rect x="1468.5" y="230.5" width="17" height="11" rx="2" fill="#f4f4f4" stroke="#b8c8e0" stroke-width="1"/><rect x="1467" y="284" width="4.5" height="3.5" fill="#000"/><rect x="1473.5" y="284.5" width="14" height="3" fill="#fff" stroke="#333" stroke-width="0.8"/><rect x="1467" y="290" width="4.5" height="3.5" fill="#000"/><rect x="1473.5" y="290.5" width="14" height="3" fill="#fff" stroke="#333" stroke-width="0.8"/><rect x="1467" y="296" width="4.5" height="3.5" fill="#000"/><rect x="1473.5" y="296.5" width="14" height="3" fill="#fff" stroke="#333" stroke-width="0.8"/><path d="M1470 333 H1484 L1478.5 339 V346 L1476 344 V339 Z" fill="#a8a8a8" stroke="#666" stroke-width="0.7"/><ellipse cx="1477" cy="333.5" rx="7" ry="1.6" fill="#777"/><path d="M1469.5 378.5 L1473.5 381.3 V388.4 L1469.5 391.4 Z" fill="#e8e8e8" stroke="#444" stroke-width="0.8"/><rect x="1473.5" y="381.3" width="11" height="7.1" rx="0.8" fill="#fff" stroke="#555" stroke-width="0.8"/><rect x="1477.5" y="381.6" width="6.8" height="6.5" rx="0.8" fill="#7a7a7a"/><path d="M1467 384.8h20" stroke="#f4a0a0" stroke-width="0.9" stroke-dasharray="1.8 1"/><path d="M1466 433.5h12" stroke="#a8a8a8" stroke-width="0.8"/><path d="M1466 436.7h9" stroke="#a8a8a8" stroke-width="0.8"/><path d="M1466 439.9h12" stroke="#a8a8a8" stroke-width="0.8"/><path d="M1466 443.1h9" stroke="#a8a8a8" stroke-width="0.8"/><path d="M1463.5 447.5h27.5" stroke="#222" stroke-width="0.8"/><path d="M1474 450h14M1466 450h2" stroke="#777" stroke-width="0.9"/><rect x="1470" y="481" width="13.5" height="15" rx="1" fill="#c88a2a"/><rect x="1471.5" y="482.5" width="10.5" height="12" fill="#f4f4f4"/><rect x="1473.5" y="479.5" width="6.5" height="3" fill="#8a8a80"/></svg><div id="status" class="a" style="left:0;top:798px;width:1500px;height:46px;background:#dcdcdc;border-top:1px solid #d2d2d2">
<div class="t" style="left:2px;top:7.5px;letter-spacing:0.1px">45,35</div>
<div class="t" style="left:2px;top:27.5px;letter-spacing:0.1px">@-25,-15</div>
<div class="a" style="left:253px;top:4px;width:1px;height:39px;background:#8a8a8a"></div>
<div class="a" style="left:254px;top:4px;width:1px;height:39px;background:#f4f4f4"></div>
<div class="t" style="left:257px;top:7.5px;letter-spacing:0.15px">57.0088&lt;38°</div>
<div class="t" style="left:256px;top:27.5px;letter-spacing:-0.1px">@29.1548&lt;211°</div>
<div class="a" style="left:506px;top:20px;width:7px;height:7px;border-radius:50%;background:#c8c8c8"></div>
<div class="t" style="left:498px;top:13px;width:200px;text-align:right;line-height:11px;font-size:10.2px;letter-spacing:0.05px">Select entity or region<br>Move entity or reference</div>
<svg style="left:716px;top:7px" width="20" height="32"><rect x="1.5" y="1.5" width="17.5" height="29.5" rx="8.7" fill="#fff" stroke="#555" stroke-width="1"/><path d="M1.5 15.5 Q10 12.5 19 15.5" fill="none" stroke="#555" stroke-width="1"/><rect x="9" y="4" width="3" height="6" rx="1.5" fill="#fff" stroke="#555" stroke-width="0.8"/><path d="M10.5 10v3.5M10.5 1.5v2.5" stroke="#555" stroke-width="0.8"/></svg>
<div class="a" style="left:940px;top:20px;width:7px;height:7px;border-radius:50%;background:#c8c8c8"></div>
<div class="t" style="left:949px;top:13px;line-height:11px;font-size:10.2px;letter-spacing:0.05px">Selected entities:<br>1 Line on Layer "0".</div>
<div class="a" style="left:1269px;top:20px;width:7px;height:7px;border-radius:50%;background:#c8c8c8"></div>
</div>

</body></html>
